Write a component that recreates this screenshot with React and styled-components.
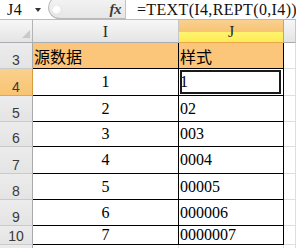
import React from 'react';
import styled, { createGlobalStyle } from 'styled-components';

const GlobalStyle = createGlobalStyle`
  html, body {
    margin: 0;
    padding: 0;
    background: #fff;
    overflow: hidden;
  }
`;

const serif = `"Liberation Serif", "Times New Roman", serif`;
const cjk = `"Noto Sans CJK SC", "Noto Sans", sans-serif`;

const Window = styled.div`
  width: 296px;
  height: 248px;
  overflow: hidden;
  display: flex;
  flex-direction: column;
  background: #fff;
`;

const FormulaBar = styled.div`
  height: 19px;
  flex: 0 0 auto;
  display: flex;
  overflow: hidden;
  border-bottom: 1px solid #b8bcc2;
  background: #fff;
`;

const NameBox = styled.div`
  width: 48px;
  flex: 0 0 auto;
  display: flex;
  align-items: center;
  padding-left: 7px;
  box-sizing: border-box;
  font-family: ${serif};
  font-size: 16px;
  letter-spacing: 0.5px;
  color: #111;
`;

const Arrow = styled.span`
  margin-left: 13px;
  width: 0;
  height: 0;
  border-left: 3px solid transparent;
  border-right: 3px solid transparent;
  border-top: 4px solid #333;
`;

const FxPill = styled.div`
  width: 77px;
  height: 23px;
  margin-top: -4px;
  flex: 0 0 auto;
  box-sizing: border-box;
  display: flex;
  align-items: center;
  justify-content: space-between;
  padding: 4px 4px 0 3px;
  border: 1px solid #b9b9b9;
  border-right: none;
  border-radius: 12px 0 0 12px;
  background: linear-gradient(to bottom, #f4f4f4, #e6e6e6);
`;

const Grip = styled.span`
  width: 10px;
  height: 10px;
  border-radius: 50%;
  background: radial-gradient(circle at 40% 40%, #ffffff 30%, #e2e2e2 100%);
  box-shadow: inset 0 0 1px #c8c8c8;
`;

const FxLabel = styled.span`
  font-family: ${serif};
  font-style: italic;
  font-weight: bold;
  font-size: 15px;
  color: #3a3a3a;
  letter-spacing: -0.5px;
`;

const FormulaInput = styled.div`
  flex: 1;
  display: flex;
  align-items: center;
  padding-left: 11px;
  border-left: 1px solid #c4c4c4;
  font-family: ${serif};
  font-size: 16px;
  letter-spacing: 0.35px;
  color: #111;
  white-space: nowrap;
`;

const Sheet = styled.div`
  flex: 1;
  display: flex;
  flex-direction: column;
`;

const Row = styled.div`
  display: grid;
  grid-template-columns: 33px 146px 105px 1fr;
  height: ${(p) => p.$h}px;
  flex: 0 0 auto;
`;

const Corner = styled.div`
  border-right: 1px solid #b4b4b4;
  border-bottom: 1px solid #a8acb2;
  background: linear-gradient(to bottom, #f7f7f7, #e4e4e4);
  display: flex;
  align-items: flex-end;
  justify-content: flex-end;
  padding: 0 2px 4px 0;
`;

const ColHeader = styled.div`
  display: flex;
  align-items: center;
  justify-content: center;
  padding-top: 2px;
  border-right: 1px solid ${(p) => (p.$active ? '#e0a040' : '#c6c6c6')};
  border-bottom: 1px solid ${(p) => (p.$active ? '#e8a84a' : '#a8acb2')};
  background: ${(p) =>
    p.$active
      ? 'linear-gradient(to bottom, #f9d092 0%, #f8c472 54%, #fff46c 56%, #fdeb5a 96%)'
      : 'linear-gradient(to bottom, #f7f7f7, #e4e4e4)'};
  font-family: ${serif};
  font-size: 16px;
  color: #2a2a2a;
`;

const RowHeader = styled.div`
  display: flex;
  align-items: flex-end;
  justify-content: center;
  border-right: 1px solid ${(p) => (p.$active ? '#d89a3c' : '#a9a9a9')};
  border-bottom: 1px solid ${(p) => (p.$active ? '#e2a54c' : '#cacaca')};
  background: ${(p) =>
    p.$active
      ? 'linear-gradient(to bottom, #fad08c, #f8c473)'
      : 'linear-gradient(to bottom, #ececec, #e4e4e4)'};
  font-family: "Liberation Sans", Arial, sans-serif;
  font-size: 14px;
  line-height: 16px;
  color: #3a3a3a;
`;

const Cell = styled.div`
  position: relative;
  display: flex;
  align-items: center;
  justify-content: ${(p) => (p.$center ? 'center' : 'flex-start')};
  padding-left: ${(p) => (p.$center ? 0 : 1)}px;
  border-right: 1px solid #000;
  border-bottom: 1px solid #000;
  background: ${(p) => (p.$fill ? '#fbc57a' : '#fff')};
  font-family: ${(p) => (p.$cjk ? cjk : serif)};
  font-size: 16px;
  line-height: 16px;
  color: #000;
  white-space: nowrap;
`;

const BlankCell = styled.div`
  border-right: 1px solid #dedede;
  border-bottom: 1px solid #dedede;
  background: #fff;
`;

const Selection = styled.div`
  position: absolute;
  top: 1px;
  bottom: 1px;
  left: 1px;
  right: 2px;
  border: 2px solid #1a1a1a;
  pointer-events: none;
`;

const heights = [27, 26, 25, 27, 26, 26, 19];

const rows = [1, 2, 3, 4, 5, 6, 7].map((n, i) => ({
  num: i + 4,
  src: n,
  styled: String(n).padStart(n, '0'),
  h: heights[i],
}));

function App() {
  return (
    <>
      <GlobalStyle />
      <Window>
        <FormulaBar>
          <NameBox>
            J4
            <Arrow />
          </NameBox>
          <FxPill>
            <Grip />
            <FxLabel>fx</FxLabel>
          </FxPill>
          <FormulaInput>=TEXT(I4,REPT(0,I4))</FormulaInput>
        </FormulaBar>
        <Sheet>
          <Row $h={23}>
            <Corner>
              <svg width="8" height="8" viewBox="0 0 8 8">
                <polygon points="8,0 8,8 0,8" fill="#c9c9c9" />
              </svg>
            </Corner>
            <ColHeader>I</ColHeader>
            <ColHeader $active>J</ColHeader>
            <ColHeader />
          </Row>
          <Row $h={26}>
            <RowHeader>3</RowHeader>
            <Cell $fill $cjk>源数据</Cell>
            <Cell $fill $cjk>样式</Cell>
            <BlankCell />
          </Row>
          {rows.map((r) => (
            <Row key={r.num} $h={r.h}>
              <RowHeader $active={r.num === 4}>{r.num}</RowHeader>
              <Cell $center>{r.src}</Cell>
              <Cell>
                {r.styled}
                {r.num === 4 && <Selection />}
              </Cell>
              <BlankCell />
            </Row>
          ))}
          <Row $h={20}>
            <RowHeader />
            <BlankCell />
            <BlankCell />
            <BlankCell />
          </Row>
        </Sheet>
      </Window>
    </>
  );
}

export default App;
